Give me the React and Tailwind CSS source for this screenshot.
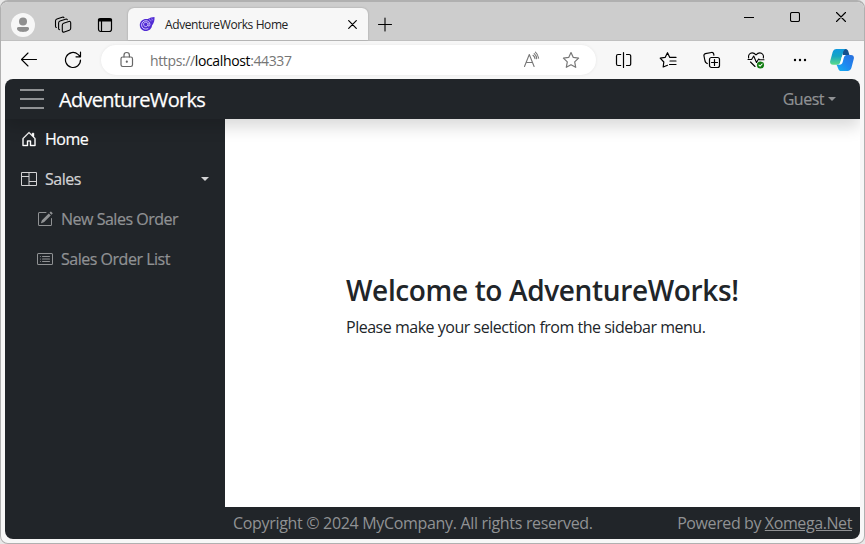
import { BsHouseDoor, BsColumns, BsPencilSquare, BsCardList } from "react-icons/bs";

const stroke = { fill: "none", stroke: "currentColor", strokeLinecap: "round", strokeLinejoin: "round" };

function Icon({ size = 18, w = 1.1, className = "", children }) {
  return (
    <svg width={size} height={size} viewBox={`0 0 ${size} ${size}`} className={`block shrink-0 ${className}`} {...stroke} strokeWidth={w}>
      {children}
    </svg>
  );
}

function TabStrip() {
  return (
    <div className="flex h-[39px] shrink-0 items-end border-b border-[#c0c0c0] bg-[#cdcdcd]">
      <div className="mb-[3px] ml-[10px] flex size-6 items-center justify-center rounded-full bg-[#f7f7f7]">
        <svg width="24" height="24" viewBox="0 0 24 24" fill="#8f8f8f">
          <circle cx="12" cy="8.500" r="4" />
          <path d="M7.500 14h9c1.100 0 1.500.8 1.500 1.600 0 2.200-2.500 3.400-6 3.400s-6-1.200-6-3.400c0-.8.4-1.600 1.500-1.600z" />
        </svg>
      </div>
      <Icon className="mb-[6px] ml-[19px]">
        <path d="M9.600 7.200l5.200-1.700c1.200-.3 1.900.2 1.900 1.400v5.300c0 1-.5 1.700-1.400 2l-5 1.800c-1.200.4-2-.1-2-1.300V9.200c0-1 .4-1.700 1.300-2z" />
        <path d="M5.600 13.700c-.7-.1-1-.6-1-1.300V7c0-1 .5-1.700 1.400-2l5.500-1.800c.9-.3 1.500-.1 1.800.5" />
        <path d="M2.400 11.500c-.6-.1-.9-.6-.9-1.300V5c0-1 .5-1.700 1.400-2l5.300-1.700c.9-.3 1.500-.1 1.800.5" />
      </Icon>
      <Icon className="mb-[6px] ml-[24px]" w={1.200}>
        <rect x="2.500" y="2.500" width="13" height="13" rx="2.200" />
        <path d="M3.200 4h11.600" strokeWidth="2.800" />
        <path d="M5.500 5v10" />
      </Icon>
      <div className="ml-[14px] flex h-[32px] w-[240px] items-center rounded-t-[6px] bg-[#f7f7f7] shadow-[0_0_2px_#999]">
        <svg width="16" height="16" viewBox="0 0 16 16" className="ml-[11px] shrink-0">
          <path d="M15.500 1c-2.300.1-4.800.6-6.700 2.100C4.500 2.200.8 5 .8 9c0 3.500 2.600 6 5.900 6 3.600 0 6-2.400 6.300-5.500C14.800 7.600 15.800 4.500 15.500 1z" fill="#512bd4" />
          <path d="M8.900 8.900a2.200 2.200 0 1 1-.1-1.300M9 6.800v2.300c0 1.700 2.100 1.200 1.900-.8C10.700 6 9 4.700 6.800 4.700A4.200 4.200 0 0 0 2.600 9c0 2.400 1.800 4.100 4.100 4.100 1 0 1.900-.3 2.600-.7" fill="none" stroke="#ddd5ff" strokeWidth=".9" />
          <path d="M10.300 2.600l.8 2.200 1.500.1M12.700 2.300l.3 1.500 1.200.1" fill="none" stroke="#b8a8fa" strokeWidth=".6" />
        </svg>
        <span className="ml-[10px] mt-[2px] text-[12px] tracking-[-0.400px] text-[#222]">AdventureWorks Home</span>
        <Icon size={9} w={1.200} className="ml-auto mr-[11px] mt-px text-black"><path d="M.7.7l7.600 7.600M8.300.7L.7 8.300" /></Icon>
      </div>
      <Icon size={15} className="mb-[8px] ml-[9px]"><path d="M8 1v13M1.500 7.500h13" /></Icon>
      <div className="mb-[18px] ml-auto mr-[18px] flex items-center gap-[36px]">
        <Icon size={10} w={1}><path d="M0 5.500h10" strokeLinecap="butt" /></Icon>
        <Icon size={10}><rect x=".5" y=".5" width="9" height="9" rx="1.600" /></Icon>
        <Icon size={10}><path d="M.5.5l9 9M9.500.5l-9 9" /></Icon>
      </div>
    </div>
  );
}

function Toolbar() {
  return (
    <div className="flex h-[38px] shrink-0 items-center bg-[#f7f7f7]">
      <Icon className="ml-[19px]" w={1.100}><path d="M16.500 8.500H1.500M8 2L1.500 8.500 8 15" /></Icon>
      <Icon className="ml-[26px]" w={1.200}><path d="M16.500 9A7.500 7.500 0 1 1 14 3.400L16.300 5.500M16.500 1.200v4.600H12" /></Icon>
      <div className="ml-[19px] flex h-[30px] w-[495px] items-center rounded-full bg-white shadow-[0_0_3px_#e5e5e5]">
        <Icon className="ml-[17px] text-[#666]" w={1.200}>
          <rect x="3" y="6" width="11.500" height="9.500" rx="1.700" />
          <path d="M6 6V4.200a2.700 2.700 0 0 1 5.400 0V6" />
          <circle cx="8.800" cy="10.700" r=".5" fill="currentColor" />
        </Icon>
        <span className="ml-[14px] text-[14px] tracking-[-0.370px] text-[#757575]">https://<span className="text-black">localhost</span>:44337</span>
        <Icon className="ml-auto text-[#777]">
          <path d="M1.500 15.500l4.800-12 4.800 12M3 11.500h6.600M10 4.300c1 .8 1.700 1.900 2 3.300M11.200 2.600c1.500 1.200 2.300 2.900 2.500 5M12.400 1.200c1.800 1.500 2.800 3.500 3.200 6" />
        </Icon>
        <Icon className="ml-[21px] mr-[16px] text-[#777]" w={1.200}>
          <path d="M9 1.500l2.300 4.900 5.300.7-3.900 3.800 1 5.400L9 13.700l-4.700 2.600 1-5.400L1.400 7.100l5.300-.7z" />
        </Icon>
      </div>
      <Icon className="ml-[19px]" w={1.200}>
        <path d="M8.500 1.500v15M5.700 3.500H3a1.500 1.500 0 0 0-1.500 1.500v8a1.500 1.500 0 0 0 1.500 1.500h2.700M11.500 3.500h2.700a1.500 1.500 0 0 1 1.500 1.500v8a1.500 1.500 0 0 1-1.500 1.500h-2.700" />
      </Icon>
      <Icon className="ml-[26px]" w={1.200}>
        <path d="M8.500 14.300L4.200 16l.6-5L1.200 7.100l4.900-.7L8.500 1.700l2.300 4.700H17M11 10h6M10.500 13.500H17" />
      </Icon>
      <Icon className="ml-[26px]" w={1.200}>
        <rect x="6.500" y="6.500" width="10" height="10" rx="2" />
        <path d="M11.500 8.500v6M8.500 11.500h6M4.300 12.500l-.8-.4C2.500 11.500 2.300 11 2 10L1 5c-.3-1.200.2-2 1.400-2.300l6-1.200c1.200-.2 2 .3 2.300 1.500l.2 1.200" />
      </Icon>
      <svg width="18" height="18" viewBox="0 0 18 18" className="ml-[26px] shrink-0" {...stroke} strokeWidth="1.100">
        <path d="M1.700 7C.9 3.800 3 1.900 5.200 1.900c1.600 0 2.700.8 3.800 2 1.100-1.200 2.200-2 3.800-2 2.200 0 4.300 1.900 3.500 5.100M3.500 11l4.500 4.500M1 8.500h3.600L6.700 5l2.800 6.500L11.600 8l1 .8H17" />
        <circle cx="13.500" cy="14" r="3.600" fill="#107c10" stroke="none" />
        <path d="M12 14.200l1.100 1 2-2.200" stroke="white" />
      </svg>
      <svg width="14" height="4" viewBox="0 0 14 4" className="ml-[28px] shrink-0">
        <circle cx="2" cy="2" r="1.200" /><circle cx="7" cy="2" r="1.200" /><circle cx="12" cy="2" r="1.200" />
      </svg>
      <svg width="24" height="22" viewBox="0 0 24 22" className="ml-[23px] shrink-0">
        <defs>
          <linearGradient id="copilotLeft" x1="0" y1="0" x2="0" y2="1"><stop stopColor="#1099df" /><stop offset=".45" stopColor="#16a5c4" /><stop offset="1" stopColor="#5bdc88" /></linearGradient>
          <linearGradient id="copilotRight" x1="1" y1="0" x2="0" y2="1"><stop stopColor="#2a6fdc" /><stop offset=".5" stopColor="#1f86f0" /><stop offset="1" stopColor="#13b4ef" /></linearGradient>
        </defs>
        <path d="M11 0h4.500c2 0 2.500 1.400 3 3l.9 3H13z" fill="#15508c" />
        <path d="M6.500 0H16c-1.900.4-2.500 1.800-3 3.700L10.500 12.500c-.6 2-1.300 3.300-3.400 3.300H3C.6 15.800-.3 14 .2 12L2.600 3.300C3.200 1.200 4.500 0 6.500 0z" fill="url(#copilotLeft)" />
        <path d="M6.500 15.800h1.200c2.500 0 3.500-1.700 4.100-3.700l1-3.500C13.400 6.800 14.500 6 16.200 6H21c2.400 0 3.300 1.800 2.800 3.800l-2.300 8.800c-.6 2.200-1.900 3.400-4 3.400H10.500c-2.100 0-2.400-3.500-4-6.200z" fill="url(#copilotRight)" />
        <path d="M11.800 8c.6-1.500 1.400-2 2.900-2h1.600c-1.500.3-2 1.300-2.400 2.600l-1.200 4.400c-.5 1.700-1.400 2.800-3.100 2.800H8.200c1.500-.3 1.900-1.300 2.400-3z" fill="white" />
      </svg>
    </div>
  );
}

function Caret({ className = "" }) {
  return <span className={`border-x-4 border-t-4 border-x-transparent border-t-current ${className}`} />;
}

function Header() {
  return (
    <header className="relative z-10 flex h-[40px] shrink-0 items-center bg-[#212529] shadow-[0_8px_16px_rgba(0,0,0,0.15)]">
      <div className="ml-[15px] flex w-6 flex-col gap-[7px]">
        <span className="h-[2px] bg-[#909294]" /><span className="h-[2px] bg-[#909294]" /><span className="h-[2px] bg-[#909294]" />
      </div>
      <span className="ml-[15px] mt-px text-[20px] leading-none tracking-[-0.700px] text-white [-webkit-text-stroke:0.25px_white]">AdventureWorks</span>
      <div className="ml-auto mr-[24px] flex items-center text-[#909294]">
        <span className="text-[16px] tracking-[-0.500px] [-webkit-text-stroke:0.2px_currentColor]">Guest</span>
        <Caret className="ml-1" />
      </div>
    </header>
  );
}

function Sidebar() {
  return (
    <nav className="w-[220px] shrink-0 bg-[#212529] text-[16px] tracking-[-0.480px] [-webkit-text-stroke:0.2px_currentColor]">
      <div className="flex h-10 items-center gap-2 pl-4 text-white"><BsHouseDoor className="size-4 stroke-[0.4]" /><span>Home</span></div>
      <div className="flex h-10 items-center gap-2 pl-4 pr-4 text-[#d3d3d4]"><BsColumns className="size-4" /><span>Sales</span><Caret className="ml-auto" /></div>
      <div className="flex h-10 items-center gap-2 pl-8 text-[#909294]"><BsPencilSquare className="size-4" /><span>New Sales Order</span></div>
      <div className="flex h-10 items-center gap-2 pl-8 text-[#909294]"><BsCardList className="size-4" /><span>Sales Order List</span></div>
    </nav>
  );
}

export default function App() {
  return (
    <div className="h-[544px] w-[865px] bg-[#e8e8e8] font-['Open_Sans','Noto_Sans',sans-serif]">
      <div className="flex h-full flex-col overflow-hidden rounded-[8px] border border-t-2 border-[#b0b0b0] bg-[#f7f7f7] text-black">
        <TabStrip />
        <Toolbar />
        <div className="mx-[4px] flex h-[460px] shrink-0 flex-col overflow-hidden rounded-[8px] bg-white">
          <Header />
          <div className="flex min-h-0 flex-1">
            <Sidebar />
            <div className="flex min-w-0 flex-1 flex-col">
              <main className="flex flex-1 justify-center">
                <div className="w-[393px] pt-[154px] text-[#212529]">
                  <h1 className="whitespace-nowrap text-[28px] font-semibold leading-[34px] tracking-[-0.360px]">Welcome to AdventureWorks!</h1>
                  <p className="mt-2 whitespace-nowrap text-[16px] leading-6 tracking-[-0.480px]">Please make your selection from the sidebar menu.</p>
                </div>
              </main>
              <footer className="flex h-8 shrink-0 items-center justify-between bg-[#212529] px-2 text-[16px] text-[#909294]">
                <span className="tracking-[-0.320px]">Copyright © 2024 MyCompany. All rights reserved.</span>
                <span className="tracking-[-0.400px]">Powered by <a className="underline">Xomega.Net</a></span>
              </footer>
            </div>
          </div>
        </div>
      </div>
    </div>
  );
}
